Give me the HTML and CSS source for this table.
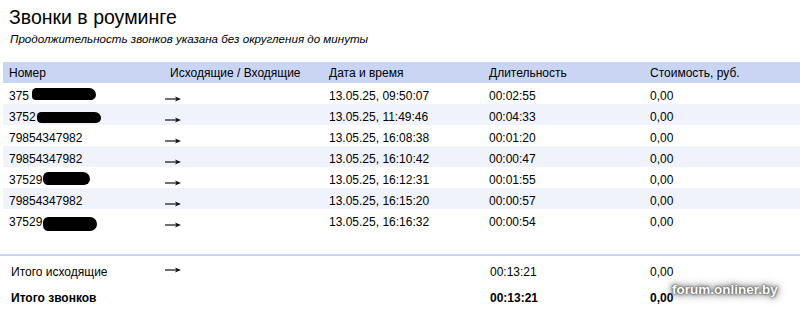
FILE: index.html
```html
<!DOCTYPE html>
<html lang="ru">
<head>
<meta charset="utf-8">
<title>Звонки в роуминге</title>
<link rel="stylesheet" href="styles.css">
</head>
<body>
<div class="page">
  <h1 class="title">Звонки в роуминге</h1>
  <p class="subtitle">Продолжительность звонков указана без округления до минуты</p>

  <table class="calls">
    <colgroup>
      <col class="c1"><col class="c2"><col class="c3"><col class="c4"><col class="c5">
    </colgroup>
    <thead>
      <tr><th>Номер</th><th>Исходящие / Входящие</th><th>Дата и время</th><th>Длительность</th><th>Стоимость, руб.</th></tr>
    </thead>
    <tbody>
      <tr><td>375<span class="blob blob-a"></span></td><td class="dir"><svg class="arrow" viewBox="0 0 16 6" width="16" height="6"><line x1="0" y1="3" x2="12" y2="3" stroke="#111" stroke-width="1.2"/><polygon points="10,0.4 16,3 10,5.6 11.5,3" fill="#111"/></svg></td><td>13.05.25, 09:50:07</td><td>00:02:55</td><td>0,00</td></tr>
      <tr><td>3752<span class="blob blob-b"></span></td><td class="dir"><svg class="arrow" viewBox="0 0 16 6" width="16" height="6"><line x1="0" y1="3" x2="12" y2="3" stroke="#111" stroke-width="1.2"/><polygon points="10,0.4 16,3 10,5.6 11.5,3" fill="#111"/></svg></td><td>13.05.25, 11:49:46</td><td>00:04:33</td><td>0,00</td></tr>
      <tr><td>79854347982</td><td class="dir"><svg class="arrow" viewBox="0 0 16 6" width="16" height="6"><line x1="0" y1="3" x2="12" y2="3" stroke="#111" stroke-width="1.2"/><polygon points="10,0.4 16,3 10,5.6 11.5,3" fill="#111"/></svg></td><td>13.05.25, 16:08:38</td><td>00:01:20</td><td>0,00</td></tr>
      <tr><td>79854347982</td><td class="dir"><svg class="arrow" viewBox="0 0 16 6" width="16" height="6"><line x1="0" y1="3" x2="12" y2="3" stroke="#111" stroke-width="1.2"/><polygon points="10,0.4 16,3 10,5.6 11.5,3" fill="#111"/></svg></td><td>13.05.25, 16:10:42</td><td>00:00:47</td><td>0,00</td></tr>
      <tr><td>37529<span class="blob blob-c"></span></td><td class="dir"><svg class="arrow" viewBox="0 0 16 6" width="16" height="6"><line x1="0" y1="3" x2="12" y2="3" stroke="#111" stroke-width="1.2"/><polygon points="10,0.4 16,3 10,5.6 11.5,3" fill="#111"/></svg></td><td>13.05.25, 16:12:31</td><td>00:01:55</td><td>0,00</td></tr>
      <tr><td>79854347982</td><td class="dir"><svg class="arrow" viewBox="0 0 16 6" width="16" height="6"><line x1="0" y1="3" x2="12" y2="3" stroke="#111" stroke-width="1.2"/><polygon points="10,0.4 16,3 10,5.6 11.5,3" fill="#111"/></svg></td><td>13.05.25, 16:15:20</td><td>00:00:57</td><td>0,00</td></tr>
      <tr><td>37529<span class="blob blob-d"></span></td><td class="dir"><svg class="arrow" viewBox="0 0 16 6" width="16" height="6"><line x1="0" y1="3" x2="12" y2="3" stroke="#111" stroke-width="1.2"/><polygon points="10,0.4 16,3 10,5.6 11.5,3" fill="#111"/></svg></td><td>13.05.25, 16:16:32</td><td>00:00:54</td><td>0,00</td></tr>
    </tbody>
  </table>

  <div class="separator"></div>

  <table class="totals">
    <colgroup>
      <col class="c1"><col class="c2"><col class="c3"><col class="c4"><col class="c5">
    </colgroup>
    <tbody>
      <tr><td class="label">Итого исходящие</td><td class="dir"><svg class="arrow arrow-mid" viewBox="0 0 16 6" width="16" height="6"><line x1="0" y1="3" x2="12" y2="3" stroke="#111" stroke-width="1.2"/><polygon points="10,0.4 16,3 10,5.6 11.5,3" fill="#111"/></svg></td><td></td><td class="dur">00:13:21</td><td>0,00</td></tr>
      <tr class="grand"><td class="label">Итого звонков</td><td></td><td></td><td class="dur">00:13:21</td><td>0,00</td></tr>
    </tbody>
  </table>

  <span class="watermark">forum.onliner.by</span>
</div>
</body>
</html>
```

FILE: styles.css
```css
html, body {
  margin: 0;
  padding: 0;
  background: #ffffff;
}

body {
  font-family: "Liberation Sans", Arial, sans-serif;
  font-size: 12px;
  color: #000;
}

.page {
  position: relative;
  width: 800px;
  height: 311px;
  overflow: hidden;
}

.title {
  margin: 6px 0 0 9px;
  font-size: 19.5px;
  line-height: 22px;
  font-weight: normal;
}

.subtitle {
  margin: 4px 0 0 10px;
  font-size: 11.6px;
  line-height: 14px;
  font-style: italic;
}

table {
  border-collapse: collapse;
  border-spacing: 0;
  table-layout: fixed;
  width: 797px;
  margin-left: 3px;
}

.c1 { width: 161px; }
.c2 { width: 159px; }
.c3 { width: 160px; }
.c4 { width: 161px; }
.c5 { width: 156px; }

.calls {
  margin-top: 16px;
}

.calls th {
  background: #c9d5f2;
  font-weight: normal;
  text-align: left;
  padding: 4px 6px 3px;
  line-height: 14px;
  white-space: nowrap;
}

.calls td {
  padding: 6px 6px 1px;
  line-height: 14px;
  height: 14px;
  white-space: nowrap;
}

.calls tbody tr:nth-child(even) td {
  background: #f1f3fc;
}

.calls td.dir,
.totals td.dir {
  padding-left: 1px;
}

.arrow {
  display: inline-block;
  vertical-align: -2px;
}

.arrow-mid {
  vertical-align: 3px;
}

.blob {
  position: relative;
  display: inline-block;
  background: #000;
  vertical-align: top;
}

.blob-a {
  width: 64px;
  height: 12px;
  margin-left: 3px;
  top: -1px;
  border-radius: 6px 9px 7px 5px;
}

.blob-b {
  width: 64px;
  height: 11px;
  margin-left: 1px;
  top: 2px;
  border-radius: 6px 9px 7px 6px;
}

.blob-c {
  width: 47px;
  height: 13px;
  margin-left: 1px;
  top: -1px;
  border-radius: 6px 8px 7px 6px;
}

.blob-d {
  width: 54px;
  height: 14px;
  margin-left: 1px;
  top: 2px;
  border-radius: 6px 8px 8px 6px;
}

.separator {
  height: 2px;
  margin: 24px 0 0 0;
  background: #c9d5f2;
}

.totals td {
  padding: 9px 6px 3px;
  line-height: 14px;
  white-space: nowrap;
}

.totals td.label {
  padding-left: 8px;
}

.totals td.dur {
  padding-left: 7px;
}

.totals .grand td {
  font-weight: bold;
}

.watermark {
  position: absolute;
  left: 672px;
  top: 282px;
  font-family: "Liberation Sans", Arial, sans-serif;
  font-weight: bold;
  font-size: 13.5px;
  line-height: 16px;
  color: #ffffff;
  text-shadow: 0 0 1px #444, 0 0 3px #555, 0 0 5px #666, 0 0 8px #888, 0 0 12px #aaa;
}
```
